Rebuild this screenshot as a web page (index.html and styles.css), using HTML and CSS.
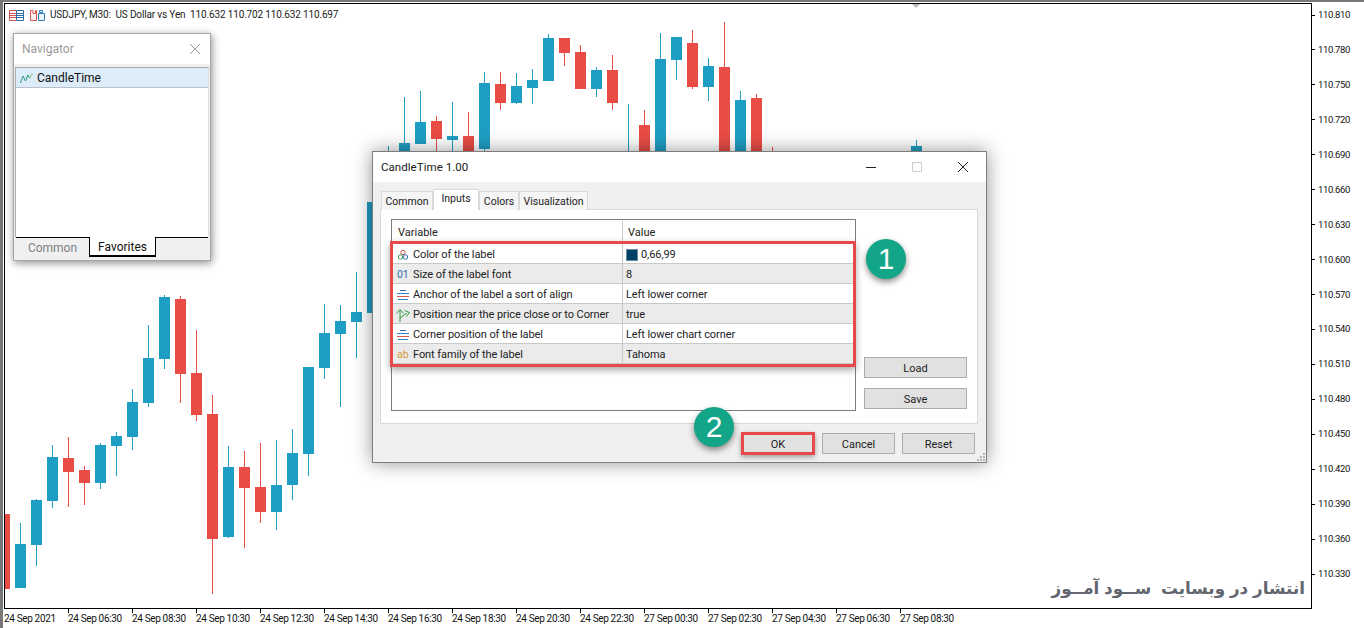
FILE: index.html
```html
<!DOCTYPE html>
<html lang="en">
<head>
<meta charset="utf-8">
<title>USDJPY, M30 - CandleTime</title>
<link rel="stylesheet" href="styles.css">
</head>
<body>
<svg class="defs" width="0" height="0" aria-hidden="true">
  <symbol id="i-lines" viewBox="0 0 12 12">
    <path d="M3 1.500h6" stroke="#3a6ea5" fill="none"/>
    <path d="M0 4.500h12" stroke="#2f7fd0" fill="none"/>
    <path d="M0 7.500h12" stroke="#d9534f" fill="none"/>
    <path d="M1 10.500h10" stroke="#2f7fd0" fill="none"/>
  </symbol>
</svg>
<div class="terminal">
  <div class="chart-row">
    <div class="plot">
      <svg class="candles" viewBox="5 4 1306 604" width="1306" height="604" aria-hidden="true">
        <path class="up" d="M15 544h11V588h-11zM20 523h1V588h-1zM31 500h11V545h-11zM36 499h1V566h-1zM47 457h11V501h-11zM52 445h1V508h-1zM95 445h11V483h-11zM100 443h1V489h-1zM111 436h11V446h-11zM116 432h1V476h-1zM127 402h11V437h-11zM132 389h1V450h-1zM143 358h11V403h-11zM148 325h1V407h-1zM159 297h11V359h-11zM164 295h1V369h-1zM223 467h11V537h-11zM228 446h1V538h-1zM271 485h11V512h-11zM276 440h1V530h-1zM287 453h11V485h-11zM292 429h1V500h-1zM303 367h11V454h-11zM308 367h1V476h-1zM319 333h11V368h-11zM324 304h1V379h-1zM335 321h11V334h-11zM340 305h1V407h-1zM351 312h11V322h-11zM356 272h1V358h-1zM367 202h11V313h-11zM372 190h1V329h-1zM388 146h1V300h-1zM399 143h11V250h-11zM404 97h1V260h-1zM415 122h11V144h-11zM420 91h1V144h-1zM447 136h11V140h-11zM452 102h1V160h-1zM479 83h11V149h-11zM484 72h1V155h-1zM511 86h11V103h-11zM516 73h1V104h-1zM527 80h11V88h-11zM532 69h1V104h-1zM543 38h11V81h-11zM548 34h1V81h-1zM591 70h11V89h-11zM596 67h1V97h-1zM628 104h1V160h-1zM655 59h11V200h-11zM660 33h1V220h-1zM671 37h11V60h-11zM676 37h1V80h-1zM703 66h11V87h-11zM708 58h1V101h-1zM735 100h11V200h-11zM740 91h1V220h-1zM911 146h11V200h-11zM916 140h1V220h-1z"/>
        <path class="down" d="M-1 514h11V589h-11zM63 458h11V472h-11zM68 437h1V507h-1zM79 470h11V483h-11zM84 466h1V505h-1zM175 299h11V374h-11zM180 296h1V403h-1zM191 373h11V415h-11zM196 330h1V421h-1zM207 414h11V539h-11zM212 395h1V594h-1zM239 467h11V488h-11zM244 451h1V548h-1zM255 487h11V512h-11zM260 443h1V523h-1zM431 121h11V139h-11zM436 116h1V160h-1zM463 136h11V180h-11zM468 112h1V190h-1zM495 84h11V103h-11zM500 72h1V110h-1zM559 38h11V53h-11zM564 38h1V66h-1zM575 52h11V89h-11zM580 45h1V89h-1zM607 70h11V103h-11zM612 55h1V110h-1zM639 125h11V200h-11zM644 110h1V210h-1zM687 43h11V87h-11zM692 30h1V89h-1zM719 67h11V200h-11zM724 22h1V210h-1zM751 98h11V200h-11zM756 94h1V210h-1zM772 147h1V165h-1z"/>
        <path class="marker" d="M912 4h8l-4 4z"/>
      </svg>

      <div class="legend">
        <svg class="legend-icon" viewBox="0 0 15 11" width="15" height="11" aria-hidden="true">
          <path d="M7.500.5H.5v10h7M.5 3.500h7M.5 5.500h7M.5 7.500h7" stroke="#d9534f" fill="none"/>
          <path d="M7.500.5h7v10h-7zM7.500 3.500h7M7.500 5.500h7M7.500 7.500h7" stroke="#2f6fa8" fill="none"/>
        </svg>
        <svg class="legend-icon" viewBox="0 0 15 11" width="15" height="11" aria-hidden="true">
          <path d="M.5.5h2.500v3h2.500v-3h1v10h-6z" stroke="#d9534f" fill="#fdf3f2"/>
          <path d="M8.500 3.500h6v7h-6zM9.500.5h3v2h-3z" stroke="#2f7fc0" fill="#eef6fc"/>
        </svg>
        <span class="legend-text">USDJPY, M30:&nbsp; US Dollar vs Yen&nbsp; 110.632 110.702 110.632 110.697</span>
      </div>

      <section class="navigator">
        <header class="nav-title">
          <span>Navigator</span>
          <svg viewBox="0 0 10 10" width="10" height="10" aria-hidden="true"><path d="M0 0l10 10M10 0L0 10" stroke="#999" fill="none"/></svg>
        </header>
        <div class="nav-body">
          <div class="nav-list">
            <div class="nav-item">
              <svg viewBox="0 0 14 12" width="14" height="12" aria-hidden="true">
                <path d="M.5 11L3 4l2.500 5L8 3l1.500 3" stroke="#2f9a8a" fill="none"/>
                <path d="M9.500 6L13 1" stroke="#59b050" fill="none" stroke-dasharray="2 1"/>
              </svg>
              <span>CandleTime</span>
            </div>
          </div>
          <div class="nav-tabs">
            <span class="nav-tab">Common</span>
            <span class="nav-tab nav-tab-active">Favorites</span>
          </div>
        </div>
      </section>

      <p class="watermark" lang="fa" dir="rtl">انتشار در وبسایت&nbsp; ســود آمــوز</p>
    </div>

    <div class="y-axis">
      <div class="y-label">110.810</div><div class="y-label">110.780</div><div class="y-label">110.750</div><div class="y-label">110.720</div><div class="y-label">110.690</div><div class="y-label">110.660</div><div class="y-label">110.630</div><div class="y-label">110.600</div><div class="y-label">110.570</div><div class="y-label">110.540</div><div class="y-label">110.510</div><div class="y-label">110.480</div><div class="y-label">110.450</div><div class="y-label">110.420</div><div class="y-label">110.390</div><div class="y-label">110.360</div><div class="y-label">110.330</div>
    </div>
  </div>

  <div class="x-axis">
    <div class="x-label x-first">24 Sep 2021</div><div class="x-label">24 Sep 06:30</div><div class="x-label">24 Sep 08:30</div><div class="x-label">24 Sep 10:30</div><div class="x-label">24 Sep 12:30</div><div class="x-label">24 Sep 14:30</div><div class="x-label">24 Sep 16:30</div><div class="x-label">24 Sep 18:30</div><div class="x-label">24 Sep 20:30</div><div class="x-label">24 Sep 22:30</div><div class="x-label">27 Sep 00:30</div><div class="x-label">27 Sep 02:30</div><div class="x-label">27 Sep 04:30</div><div class="x-label">27 Sep 06:30</div><div class="x-label">27 Sep 08:30</div>
  </div>

  <section class="dialog">
    <header class="dialog-title">
      <span class="dialog-name">CandleTime 1.00</span>
      <div class="window-controls">
        <span class="window-control"><svg viewBox="0 0 10 10" width="10" height="10" aria-hidden="true"><path d="M0 5.500h10" stroke="#222" fill="none"/></svg></span>
        <span class="window-control"><svg viewBox="0 0 10 10" width="10" height="10" aria-hidden="true"><path d="M.5.5h9v9h-9z" stroke="#ccc" fill="none"/></svg></span>
        <span class="window-control"><svg viewBox="0 0 10 10" width="10" height="10" aria-hidden="true"><path d="M0 0l10 10M10 0L0 10" stroke="#222" fill="none"/></svg></span>
      </div>
    </header>

    <div class="dialog-body">
      <nav class="tabs">
        <span class="tab tab-common">Common</span>
        <span class="tab tab-active">Inputs</span>
        <span class="tab tab-colors">Colors</span>
        <span class="tab tab-visual">Visualization</span>
      </nav>

      <div class="pane">
        <div class="inputs">
          <div class="inputs-head">
            <span class="head-var">Variable</span>
            <span class="head-val">Value</span>
          </div>
          <div class="rows">
            <div class="row">
              <div class="cell-var">
                <svg class="row-icon" viewBox="0 0 12 12" width="12" height="12" aria-hidden="true">
                  <circle cx="6" cy="3.500" r="2.200" fill="#fff" stroke="#c9504c"/>
                  <circle cx="3.500" cy="8" r="2.200" fill="#fff" stroke="#3f9a55"/>
                  <circle cx="8.500" cy="8" r="2.200" fill="#fff" stroke="#2f6fc0"/>
                </svg>
                <span>Color of the label</span>
              </div>
              <div class="cell-val"><i class="swatch"></i><span>0,66,99</span></div>
            </div>
            <div class="row">
              <div class="cell-var"><span class="row-glyph glyph-num">01</span><span>Size of the label font</span></div>
              <div class="cell-val">8</div>
            </div>
            <div class="row">
              <div class="cell-var">
                <svg class="row-icon" width="12" height="12" aria-hidden="true"><use href="#i-lines"/></svg>
                <span>Anchor of the label a sort of align</span>
              </div>
              <div class="cell-val">Left lower corner</div>
            </div>
            <div class="row">
              <div class="cell-var">
                <svg class="row-icon row-arrow" viewBox="0 0 16 14" width="16" height="14" aria-hidden="true">
                  <path d="M5 14V2M1.500 5.500L5 1.500l3.500 4M5 10l7-5M9.500 2.500l5 2-3 4" stroke="#2f9e44" fill="none"/>
                </svg>
                <span>Position near the price close or to Corner</span>
              </div>
              <div class="cell-val">true</div>
            </div>
            <div class="row">
              <div class="cell-var">
                <svg class="row-icon" width="12" height="12" aria-hidden="true"><use href="#i-lines"/></svg>
                <span>Corner position of the label</span>
              </div>
              <div class="cell-val">Left lower chart corner</div>
            </div>
            <div class="row">
              <div class="cell-var"><span class="row-glyph glyph-ab">ab</span><span>Font family of the label</span></div>
              <div class="cell-val">Tahoma</div>
            </div>
          </div>
        </div>
        <div class="side-buttons">
          <button class="btn btn-side" type="button">Load</button>
          <button class="btn btn-side" type="button">Save</button>
        </div>
      </div>

      <footer class="dialog-footer">
        <button class="btn btn-ok" type="button">OK</button>
        <button class="btn" type="button">Cancel</button>
        <button class="btn" type="button">Reset</button>
      </footer>
    </div>

    <svg class="grip" viewBox="0 0 10 10" width="10" height="10" aria-hidden="true">
      <path d="M7 1h2v2H7zM4 4h2v2H4zM7 4h2v2H7zM1 7h2v2H1zM4 7h2v2H4zM7 7h2v2H7z" fill="#b5b5b5"/>
    </svg>
    <span class="badge badge-one">1</span>
    <span class="badge badge-two">2</span>
  </section>
</div>
</body>
</html>
```
FILE: styles.css
```css
* { box-sizing: border-box; }

html, body {
  margin: 0;
  padding: 0;
  background: #fff;
}

body {
  font-family: Roboto, "Noto Sans", sans-serif;
  font-size: 11px;
  color: #222;
  overflow: hidden;
}

.defs { position: absolute; }

.terminal {
  position: relative;
  width: 1364px;
  height: 628px;
  border-top: 2px solid #777;
  border-left: 3px solid #777;
  padding: 1px 0 0 1px;
  overflow: hidden;
}

.chart-row {
  display: flex;
  height: 606px;
}

.plot {
  position: relative;
  width: 1308px;
  height: 606px;
  border: 1px solid #000;
  overflow: hidden;
  flex: none;
}

.candles {
  position: absolute;
  left: 0;
  top: 0;
  display: block;
}

.up { fill: #1f9ec4; }
.down { fill: #e84c45; }
.marker { fill: #bdbdbd; }

.legend {
  position: absolute;
  left: 4px;
  top: 5px;
  display: flex;
  align-items: center;
  gap: 6px;
  height: 12px;
  white-space: nowrap;
  color: #222;
}

.legend-text {
  font-size: 10px;
  letter-spacing: -.15px;
  line-height: 12px;
  margin-left: -1px;
}

/* Navigator window */
.navigator {
  position: absolute;
  left: 8px;
  top: 29px;
  width: 198px;
  height: 228px;
  display: flex;
  flex-direction: column;
  background: #fff;
  border: 1px solid #a6a6a6;
  box-shadow: 1px 2px 8px rgba(0, 0, 0, .45);
}

.nav-title {
  flex: none;
  height: 29px;
  margin-bottom: 1px;
  display: flex;
  align-items: center;
  justify-content: space-between;
  padding: 0 10px 0 8px;
  font-size: 12px;
  color: #9a9a9a;
}

.nav-body {
  flex: 1;
  display: flex;
  flex-direction: column;
  background: #f0f0f0;
  padding: 3px 1px 0;
}

.nav-list {
  flex: 1;
  background: #fff;
  border: 1px solid #a9a9a9;
  border-bottom: 0;
  border-right-color: #ddd;
}

.nav-item {
  display: flex;
  align-items: center;
  gap: 3px;
  height: 20px;
  padding-left: 4px;
  background: #dcecf9;
  border-bottom: 1px solid #b9c2ca;
  font-size: 12px;
  color: #111;
}

.nav-tabs {
  flex: none;
  height: 23px;
  display: flex;
  align-items: flex-start;
  margin: 0 1px;
  border-top: 1px solid #000;
}

.nav-tab {
  width: 73px;
  height: 19px;
  display: flex;
  align-items: center;
  justify-content: center;
  font-size: 12px;
  color: #808080;
}

.nav-tab-active {
  width: 67px;
  height: 20px;
  margin-top: -1px;
  padding-top: 2px;
  background: #fff;
  color: #111;
  border: 1px solid #000;
  border-top: 0;
  border-bottom-width: 2px;
}

.watermark {
  position: absolute;
  right: 6px;
  top: 571px;
  margin: 0;
  font-family: "DejaVu Sans", sans-serif;
  font-weight: 700;
  font-size: 16.800px;
  word-spacing: -1px;
  line-height: 26px;
  color: #62666f;
  white-space: nowrap;
}

/* Axes */
.y-axis {
  flex: none;
  height: 571px;
  margin-top: 6px;
  display: flex;
  flex-direction: column;
  justify-content: space-between;
}

.y-label {
  display: flex;
  align-items: center;
  height: 12px;
  font-size: 9.500px;
  letter-spacing: -.35px;
  line-height: 12px;
  color: #111;
}

.y-label::before {
  content: "";
  width: 3px;
  height: 1px;
  margin-right: 3px;
  background: #000;
}

.x-axis {
  display: flex;
  padding-left: 0;
}

.x-label {
  flex: none;
  width: 64px;
  height: 18px;
  font-size: 10px;
  letter-spacing: -.35px;
  line-height: 12px;
  color: #111;
  white-space: nowrap;
}

.x-label::before {
  content: "";
  display: block;
  width: 1px;
  height: 4px;
  background: #000;
}

.x-first {
  margin-left: 0;
  text-indent: -1px;
}

.x-first::before { background: transparent; }

/* Dialog window */
.dialog {
  position: absolute;
  left: 369px;
  top: 149px;
  width: 615px;
  height: 312px;
  display: flex;
  flex-direction: column;
  border: 1px solid #7d7d7d;
  background: #f0f0f0;
  box-shadow: 0 0 18px rgba(0, 0, 0, .42);
}

.dialog-title {
  flex: none;
  height: 30px;
  display: flex;
  align-items: center;
  justify-content: space-between;
  padding-left: 8px;
  background: #fff;
}

.dialog-name {
  font-size: 11.600px;
  color: #222;
}

.window-controls {
  display: flex;
}

.window-control {
  width: 46px;
  height: 30px;
  display: flex;
  align-items: center;
  justify-content: center;
}

.window-control svg { margin-top: -1px; }

.dialog-body {
  flex: 1;
  display: flex;
  flex-direction: column;
  padding: 7px 8px 0 7px;
}

.tabs {
  flex: none;
  display: flex;
  align-items: flex-end;
  height: 21px;
  margin-bottom: -1px;
  padding-left: 1px;
  position: relative;
  z-index: 1;
}

.tab {
  height: 19px;
  display: flex;
  align-items: center;
  justify-content: center;
  font-size: 10.500px;
  background: #f5f5f5;
  border: 1px solid #d9d9d9;
  border-bottom: 0;
  color: #222;
}

.tab-common { width: 52px; }
.tab-colors { width: 40px; }
.tab-visual { width: 69px; }

.tab-active {
  width: 46px;
  height: 21px;
  background: #fff;
  padding-bottom: 3px;
}

.pane {
  flex: none;
  height: 215px;
  display: flex;
  align-items: flex-start;
  gap: 8px;
  padding: 9px 0 0 10px;
  background: #fff;
  border: 1px solid #d9d9d9;
}

.inputs {
  flex: none;
  width: 465px;
  height: 192px;
  border: 1px solid #7d7d7d;
  background: #fff;
}

.inputs-head {
  height: 24px;
  display: grid;
  grid-template-columns: 230px 1fr;
  align-items: center;
  padding-top: 1px;
}

.head-var { padding-left: 6px; }

.head-val {
  height: 100%;
  display: flex;
  align-items: center;
  padding-left: 5px;
  border-left: 1px solid #c8c8c8;
}

.rows {
  position: relative;
  width: 460px;
  height: 120px;
  margin-left: 1px;
  letter-spacing: -.08px;
  box-shadow: 0 0 0 3px #e8494b, 0 3px 7px 3px rgba(0, 0, 0, .35);
}

.row {
  height: 20px;
  display: grid;
  grid-template-columns: 229px 1fr;
  align-items: stretch;
  background: #fff;
  border-bottom: 1px solid #c9c9c9;
}

.row:nth-child(even) { background: #ebebeb; }

.cell-var {
  display: flex;
  align-items: center;
  padding: 2px 0 0 4px;
  gap: 4px;
  white-space: nowrap;
}

.cell-val {
  display: flex;
  align-items: center;
  padding: 2px 0 0 3px;
  border-left: 1px solid #c9c9c9;
  white-space: nowrap;
}

.row-icon { flex: none; }

.row-arrow {
  margin-left: -2px;
  margin-right: -2px;
}

.row-glyph {
  flex: none;
  width: 12px;
  font-size: 10.500px;
  line-height: 12px;
}

.glyph-num { color: #2f6fb0; }
.glyph-ab { color: #d29a3a; }

.swatch {
  display: block;
  width: 12px;
  height: 12px;
  margin-right: 3px;
  background: #004263;
  border: 1px solid #6b8aa0;
}

.side-buttons {
  flex: none;
  width: 103px;
  height: 190px;
  display: flex;
  flex-direction: column;
  justify-content: flex-end;
  gap: 10px;
}

.btn {
  width: 73px;
  height: 21px;
  padding: 1px 0 0;
  font-family: inherit;
  font-size: 11px;
  color: #222;
  background: #e1e1e1;
  border: 1px solid #adadad;
  border-radius: 0;
}

.btn-side { width: 103px; }

.btn-ok {
  width: 74px;
  height: 23px;
  border: 3px solid #e8494b;
  box-shadow: 0 2px 5px rgba(0, 0, 0, .35);
}

.dialog-footer {
  flex: none;
  display: flex;
  align-items: center;
  justify-content: flex-end;
  gap: 7px;
  margin-top: 8px;
  padding-right: 3px;
  height: 23px;
}

.grip {
  position: absolute;
  right: 0;
  bottom: 0;
}

.badge {
  position: absolute;
  width: 40px;
  height: 40px;
  display: flex;
  align-items: center;
  justify-content: center;
  border-radius: 50%;
  background: #12a587;
  color: #fff;
  font-family: "Liberation Sans", Arial, sans-serif;
  font-size: 30px;
  box-shadow: 0 3px 6px rgba(0, 0, 0, .45);
}

.badge-one { left: 493px; top: 87px; }
.badge-two { left: 321px; top: 255px; }
```
